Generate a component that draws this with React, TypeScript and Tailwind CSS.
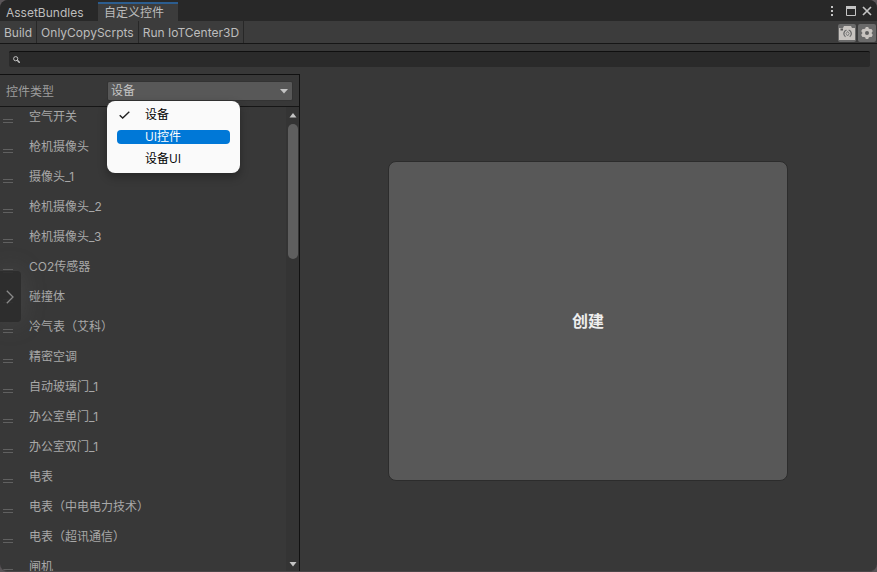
import React from "react";

const items = [
  "空气开关",
  "枪机摄像头",
  "摄像头_1",
  "枪机摄像头_2",
  "枪机摄像头_3",
  "CO2传感器",
  "碰撞体",
  "冷气表（艾科）",
  "精密空调",
  "自动玻璃门_1",
  "办公室单门_1",
  "办公室双门_1",
  "电表",
  "电表（中电电力技术）",
  "电表（超讯通信）",
  "闸机",
];

const tools = ["Build", "OnlyCopyScrpts", "Run IoTCenter3D"];

function TabBar() {
  return (
    <header className="flex h-[21px] shrink-0 items-stretch justify-between bg-[#282828]">
      <div role="tablist" className="flex">
        <button role="tab" aria-selected="false" className="w-[98px] pt-1 pl-1.5 text-left leading-4 text-[#bdbdbd]">
          AssetBundles
        </button>
        <button
          role="tab"
          aria-selected="true"
          className="mt-0.5 w-20 border-t-2 border-[#2c5d8f] bg-[#3c3c3c] pt-px pl-1.5 text-left leading-4 text-[#bdbdbd]"
        >
          自定义控件
        </button>
      </div>
      <div className="flex items-center gap-1 pr-1 text-[#c4c4c4]">
        <button aria-label="More" className="flex h-4 w-3 items-center justify-center">
          <svg width="4" height="12" viewBox="0 0 4 12" fill="currentColor">
            <path d="M2 1h2v2H2zM2 5h2v2H2zM2 9h2v2H2z" />
          </svg>
        </button>
        <button aria-label="Maximize" className="ml-1 flex h-4 w-3 items-center justify-center">
          <svg width="10" height="10" viewBox="0 0 10 10" fill="none" stroke="currentColor">
            <path d="M.5 1v8.5h9V1" />
            <path d="M0 1.5h10" strokeWidth="3" />
          </svg>
        </button>
        <button aria-label="Close" className="flex h-4 w-3 items-center justify-center">
          <svg width="10" height="10" viewBox="0 0 10 10" fill="none" stroke="currentColor" strokeWidth="1.7">
            <path d="M1 1l8 8M9 1L1 9" />
          </svg>
        </button>
      </div>
    </header>
  );
}

function Toolbar() {
  return (
    <div className="flex h-[23px] shrink-0 items-stretch justify-between border-b border-[#161616] bg-[#3c3c3c]">
      <div className="flex">
        {tools.map((tool) => (
          <button key={tool} className="border-r border-[#272727] px-1 pt-0.5 text-[#bdbdbd]">
            {tool}
          </button>
        ))}
      </div>
      <div className="flex items-center gap-0.5 pt-0.5 pr-px">
        <button aria-label="Screenshot" className="flex h-[18px] w-[18px] items-center justify-center rounded-xs bg-[#6a6a6a]">
          <svg width="16" height="14" viewBox="0 0 16 14">
            <path d="M0 2h4l1-2h7l1 2h3v12H0z" fill="#c8c4c0" />
            <path d="M1.5 2.5h2.5v2H1.5z" fill="#555" />
            <path d="M7.5 4.2A3.6 3.6 0 0 0 6.5 10.7M9.7 4.2A3.6 3.6 0 0 1 10.7 10.7" fill="none" stroke="#6a6a6a" strokeWidth="1.3" />
            <path d="M8.6 5.4L10.2 7.6L8.6 10L7 7.6z" fill="none" stroke="#777" strokeWidth="0.9" />
          </svg>
        </button>
        <button aria-label="Settings" className="flex h-[18px] w-[18px] items-center justify-center rounded-xs bg-[#6a6a6a]">
          <svg width="14" height="14" viewBox="-7 -7 14 14">
            <g fill="#c8c4c0">
              <circle r="4.8" />
              <rect x="-1.6" y="-6" width="3.2" height="12" rx="1" />
              <rect x="-1.6" y="-6" width="3.2" height="12" rx="1" transform="rotate(60)" />
              <rect x="-1.6" y="-6" width="3.2" height="12" rx="1" transform="rotate(120)" />
            </g>
            <circle r="2" fill="#606060" />
          </svg>
        </button>
      </div>
    </div>
  );
}

function SearchBar() {
  return (
    <div className="h-[30px] shrink-0 pt-[7px] pr-[7px] pl-[9px]">
      <label className="flex h-4 items-center rounded-xs border-t border-[#0f0f0f] bg-[#2a2a2a] pl-1">
        <svg width="7" height="7" viewBox="0 0 7 7" fill="none" stroke="#c4c4c4">
          <circle cx="2.7" cy="2.7" r="2.1" />
          <path d="M4.3 4.3L6.8 6.8" strokeWidth="1.5" />
        </svg>
        <input aria-label="Search" className="h-3 min-w-0 flex-1 bg-transparent px-1 text-[#bdbdbd] outline-none" />
      </label>
    </div>
  );
}

function TypeMenu() {
  return (
    <div
      role="listbox"
      aria-label="控件类型"
      className="absolute top-5 left-0 z-10 flex h-[72px] w-[133px] flex-col rounded-lg bg-[#fafafa] px-2.5 pt-[3px] font-['Open_Sans','Noto_Sans_CJK_SC',sans-serif] text-black shadow-[0_4px_10px_rgba(0,0,0,0.3)]"
    >
      <button role="option" aria-selected="true" className="flex h-[22px] items-center">
        <span className="w-7 pl-0.5">
          <svg width="11" height="8" viewBox="0 0 11 8" fill="none" stroke="#222" strokeWidth="1.4">
            <path d="M.7 4.2L3.7 7L10.3.8" />
          </svg>
        </span>
        设备
      </button>
      <button role="option" aria-selected="false" className="flex h-[22px] items-center">
        <span className="flex h-3.5 flex-1 items-center rounded-sm bg-[#0078d7] pl-7 text-white">UI控件</span>
      </button>
      <button role="option" aria-selected="false" className="flex h-[22px] items-center pl-7">
        设备UI
      </button>
    </div>
  );
}

function TypeRow() {
  return (
    <div className="flex h-8 shrink-0 items-center border-b border-[#161616] px-1.5">
      <label htmlFor="kind" className="w-[101px] pt-0.5 text-[#9d9d9d]">
        控件类型
      </label>
      <div className="relative min-w-0 flex-1">
        <select
          id="kind"
          defaultValue="设备"
          className="block h-5 w-full appearance-none rounded-xs border border-[#333] bg-[#585858] pt-px pl-[3px] text-[#c4c4c4] outline-none"
        >
          <option>设备</option>
          <option>UI控件</option>
          <option>设备UI</option>
        </select>
        <svg className="pointer-events-none absolute top-2 right-[5px]" width="8" height="5" viewBox="0 0 8 5">
          <path d="M0 0h8L4 4.5z" fill="#c4c4c4" />
        </svg>
        <TypeMenu />
      </div>
    </div>
  );
}

function ControlList() {
  return (
    <div className="flex min-h-0 flex-1">
      <div className="min-w-0 flex-1 overflow-hidden">
        <ul className="-mt-[5px]">
          {items.map((item) => (
            <li key={item} className="flex h-[30px] items-center text-[#a8a8a8]">
              <span className="mt-2 mr-4 ml-[3px] h-1 w-2.5 border-y border-[#606060]" />
              {item}
            </li>
          ))}
        </ul>
      </div>
      <div className="flex w-[13px] flex-col items-center justify-between bg-[#343434]">
        <div className="flex flex-col items-center gap-1 pt-1.5">
          <svg width="8" height="5" viewBox="0 0 8 5">
            <path d="M4 0L7.5 4.5h-7z" fill="#c4c4c4" />
          </svg>
          <div className="mt-0.5 h-[135px] w-2.5 rounded-full bg-[#5f5f5f]" />
        </div>
        <svg className="mb-1" width="8" height="5" viewBox="0 0 8 5">
          <path d="M.5 0h7L4 4.5z" fill="#c4c4c4" />
        </svg>
      </div>
    </div>
  );
}

export default function App() {
  return (
    <div className="h-screen bg-[#5a5558] font-[Inter,'Noto_Sans_CJK_SC',sans-serif] text-xs">
      <div className="relative flex h-full flex-col overflow-hidden rounded-lg border-b border-[#4a4648] bg-[#383838]">
        <TabBar />
        <Toolbar />
        <SearchBar />
        <div className="flex min-h-0 flex-1">
          <aside className="flex w-[300px] shrink-0 flex-col border-t border-r border-[#111]">
            <TypeRow />
            <ControlList />
          </aside>
          <main className="flex min-w-0 flex-1 items-center justify-center pr-px pb-1">
            <button className="h-80 w-[400px] rounded-lg border border-[#2c2c2c] bg-[#585858] text-base font-bold text-[#eee]">
              创建
            </button>
          </main>
        </div>
        <button
          aria-label="Expand"
          className="absolute top-[271px] left-0 flex h-[51px] w-[21px] items-center rounded-r-sm bg-[#2c2c2c]/90 pl-1.5 shadow-[0_0_24px_rgba(110,110,110,0.3)]"
        >
          <svg width="8" height="14" viewBox="0 0 8 14" fill="none" stroke="#8a8a8a" strokeWidth="1.3">
            <path d="M.8.8L7 7L.8 13.2" />
          </svg>
        </button>
      </div>
    </div>
  );
}
